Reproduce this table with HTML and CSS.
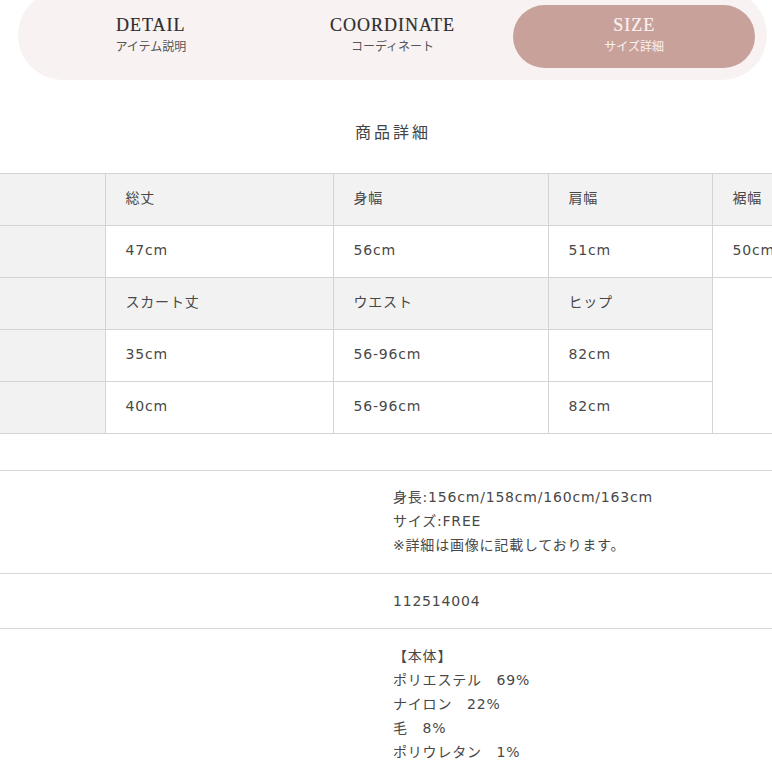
FILE: index.html
```html
<!DOCTYPE html>
<html lang="ja">
<head>
<meta charset="utf-8">
<title>SIZE</title>
<link rel="stylesheet" href="styles.css">
</head>
<body>
<nav class="tabs">
  <a class="tab"><span class="tab-en">DETAIL</span><span class="tab-ja">アイテム説明</span></a>
  <a class="tab"><span class="tab-en">COORDINATE</span><span class="tab-ja">コーディネート</span></a>
  <a class="tab active"><span class="tab-en">SIZE</span><span class="tab-ja">サイズ詳細</span></a>
</nav>

<h2 class="heading">商品詳細</h2>

<div class="table-wrap">
  <table class="size-table">
    <colgroup>
      <col class="c0"><col class="c1"><col class="c2"><col class="c3"><col class="c4">
    </colgroup>
    <tr class="head">
      <th class="side"></th><th>総丈</th><th>身幅</th><th>肩幅</th><th>裾幅</th>
    </tr>
    <tr>
      <th class="side"></th><td>47cm</td><td>56cm</td><td>51cm</td><td>50cm</td>
    </tr>
    <tr class="head">
      <th class="side"></th><th>スカート丈</th><th>ウエスト</th><th>ヒップ</th><td class="blank" rowspan="3"></td>
    </tr>
    <tr>
      <th class="side"></th><td>35cm</td><td>56-96cm</td><td>82cm</td>
    </tr>
    <tr>
      <th class="side"></th><td>40cm</td><td>56-96cm</td><td>82cm</td>
    </tr>
  </table>
</div>

<dl class="spec">
  <div class="spec-row">
    <dt></dt>
    <dd>身長:156cm/158cm/160cm/163cm<br>サイズ:FREE<br>※詳細は画像に記載しております。</dd>
  </div>
  <div class="spec-row">
    <dt></dt>
    <dd>112514004</dd>
  </div>
  <div class="spec-row">
    <dt></dt>
    <dd>【本体】<br>ポリエステル　69%<br>ナイロン　22%<br>毛　8%<br>ポリウレタン　1%</dd>
  </div>
</dl>
</body>
</html>
```

FILE: styles.css
```css
html, body {
  margin: 0;
  padding: 0;
  background: #ffffff;
}

body {
  font-family: "DejaVu Sans", "Noto Sans CJK JP", sans-serif;
  color: #444;
  overflow: hidden;
}

.tabs {
  display: flex;
  box-sizing: border-box;
  width: 749px;
  height: 90px;
  margin: -10px 0 0 18px;
  padding: 15px 12px 12px 12px;
  background: #f8f3f2;
  border-radius: 45px;
}

.tab {
  flex: 1 1 0;
  display: flex;
  flex-direction: column;
  align-items: center;
  justify-content: center;
  padding-bottom: 5px;
  border-radius: 32px;
  color: #2e2e2e;
}

.tab.active {
  background: #c9a19b;
  color: #fbf1f0;
}

.tab-en {
  font-family: "Liberation Serif", "DejaVu Serif", serif;
  font-size: 18px;
  line-height: 20px;
  letter-spacing: 1px;
  -webkit-text-stroke: 0.2px currentColor;
}

.tab-ja {
  margin-top: 4px;
  font-family: "Noto Sans CJK JP", sans-serif;
  font-size: 12px;
  line-height: 14px;
  color: #555;
}

.tab.active .tab-ja {
  color: #fbf1f0;
}

.heading {
  margin: 40px 0 0;
  padding-left: 14px;
  font-family: "Noto Sans CJK JP", sans-serif;
  font-size: 16px;
  font-weight: 400;
  line-height: 22px;
  letter-spacing: 3px;
  text-align: center;
  color: #444;
}

.table-wrap {
  margin-top: 31px;
  width: 772px;
  overflow: hidden;
}

.size-table {
  border-collapse: collapse;
  table-layout: fixed;
  width: 820px;
  font-size: 14px;
  line-height: 20px;
  letter-spacing: 0.8px;
}

.c0 { width: 105px; }
.c1 { width: 228px; }
.c2 { width: 215px; }
.c3 { width: 164px; }
.c4 { width: 108px; }

.size-table tr {
  height: 52px;
}

.size-table th,
.size-table td {
  box-sizing: border-box;
  height: 52px;
  padding: 0 0 3px 20px;
  border: 1px solid #d4d4d4;
  text-align: left;
  font-weight: 400;
  color: #484848;
  white-space: nowrap;
}

.size-table th {
  background: #f2f2f2;
}

.size-table th.side {
  border-left: none;
}

.size-table td {
  background: #fff;
}

.spec {
  margin: 36px 0 0;
  padding: 0;
}

.spec-row {
  display: grid;
  grid-template-columns: 393px 1fr;
  border-top: 1px solid #d8d8d8;
  padding: 14px 0 16px;
}

.spec-row + .spec-row {
  padding-top: 15px;
  padding-bottom: 15px;
}

.spec dt {
  margin: 0;
}

.spec dd {
  margin: 0;
  font-size: 14px;
  line-height: 24px;
  letter-spacing: 0.8px;
  color: #484848;
}
```
